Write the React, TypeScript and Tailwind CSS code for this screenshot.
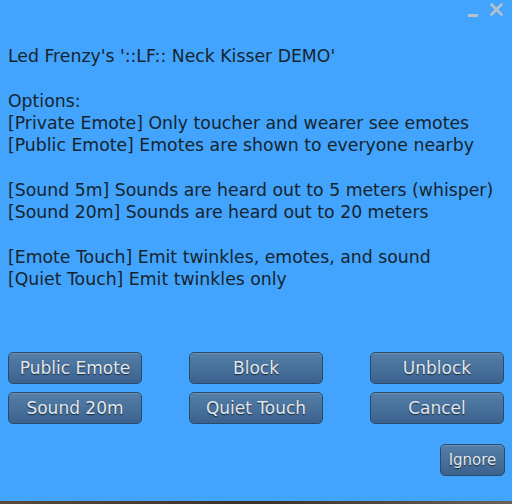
const lines = [
  "Led Frenzy's '::LF:: Neck Kisser DEMO'",
  '',
  'Options:',
  '[Private Emote] Only toucher and wearer see emotes',
  '[Public Emote] Emotes are shown to everyone nearby',
  '',
  '[Sound 5m] Sounds are heard out to 5 meters (whisper)',
  '[Sound 20m] Sounds are heard out to 20 meters',
  '',
  '[Emote Touch] Emit twinkles, emotes, and sound',
  '[Quiet Touch] Emit twinkles only',
];

const buttons = ['Public Emote', 'Block', 'Unblock', 'Sound 20m', 'Quiet Touch', 'Cancel'];

function DialogButton({ label, small }: { label: string; small?: boolean }) {
  return (
    <button
      className={`h-[32px] rounded-[5px] border border-[#2a4a6c] bg-gradient-to-b from-[#5580aa] to-[#3b628c] text-[#e2e8ee] shadow-[inset_0_1px_0_rgba(255,255,255,0.15)] [text-shadow:0_1px_1px_#16283a] ${
        small ? 'text-[15px]' : 'text-[17px]'
      }`}
    >
      {label}
    </button>
  );
}

export default function App() {
  return (
    <div className="w-[512px] h-[504px] flex flex-col bg-[#42a4fc] font-['DejaVu_Sans',sans-serif] overflow-hidden">
      {/* title bar */}
      <div className="h-[22px] flex justify-end items-start pr-[9px] pt-[3px] gap-[12px]">
        <div className="w-[10px] h-[3px] mt-[11px] bg-[#b4c2ce]" />
        <svg width="13" height="13" viewBox="0 0 13 13">
          <path d="M1.5 1.5 L11.5 11.5 M11.5 1.5 L1.5 11.5" stroke="#b4c2ce" strokeWidth="2.6" strokeLinecap="round" />
        </svg>
      </div>

      {/* message */}
      <div className="mt-[23px] px-[8px] text-[17.3px] leading-[22.3px] text-[#16242f]">
        {lines.map((l, i) => (
          <div key={i} className="h-[22.3px] whitespace-pre">
            {l}
          </div>
        ))}
      </div>

      {/* buttons */}
      <div className="mt-[62px] px-[8px] grid grid-cols-[134px_134px_134px] justify-between gap-y-[8px]">
        {buttons.map((b) => (
          <DialogButton key={b} label={b} />
        ))}
      </div>

      <div className="mt-[20px] px-[7px] flex justify-end">
        <div className="w-[65px] flex flex-col">
          <DialogButton label="Ignore" small />
        </div>
      </div>

      <div className="flex-1" />
      <div className="h-[3px] bg-gradient-to-r from-[#5a4a3a] via-[#3a3228] to-[#6a6256]" />
    </div>
  );
}
